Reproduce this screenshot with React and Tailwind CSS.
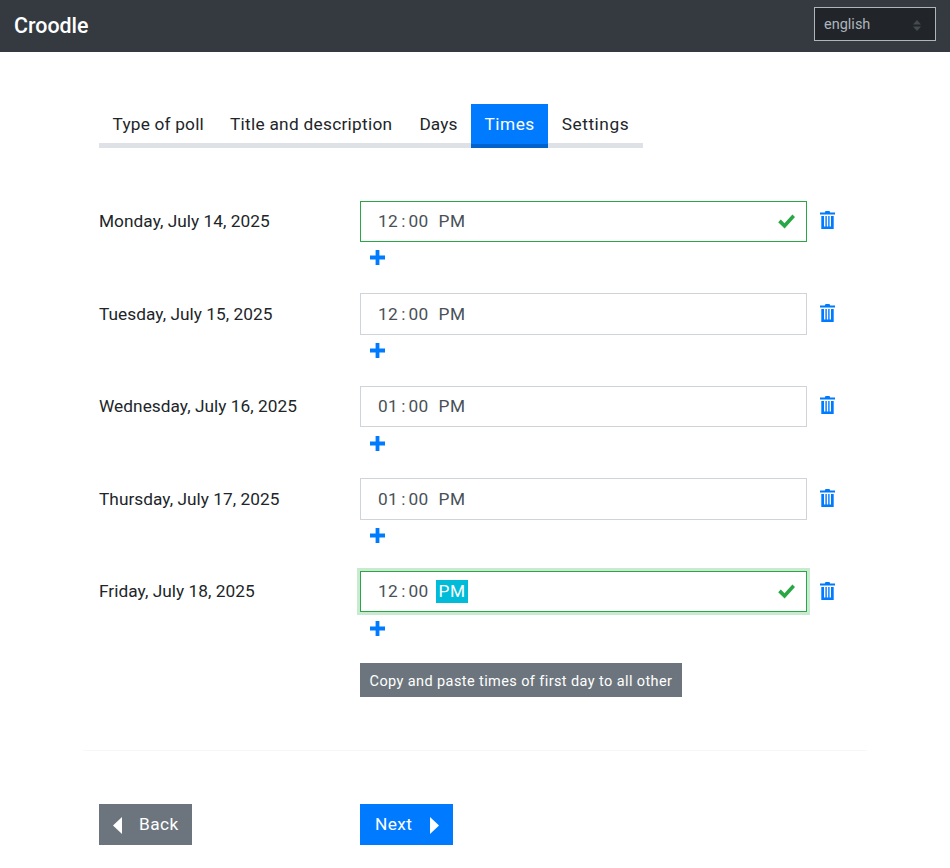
const tabs = [
  { label: 'Type of poll', className: 'pl-[13.5px] pr-[12.5px] tracking-[0.2px]' },
  { label: 'Title and description', className: 'px-[13.5px] tracking-[0.28px]' },
  { label: 'Days', className: 'px-[13.5px] tracking-[0.1px]' },
  { label: 'Times', active: true, className: 'px-[13.5px] tracking-[0.5px]' },
  { label: 'Settings', className: 'px-[13.5px] tracking-[0.55px]' },
];

const days = [
  { date: 'Monday, July 14, 2025', hour: '12', valid: true },
  { date: 'Tuesday, July 15, 2025', hour: '12' },
  { date: 'Wednesday, July 16, 2025', hour: '01' },
  { date: 'Thursday, July 17, 2025', hour: '01' },
  { date: 'Friday, July 18, 2025', hour: '12', valid: true, focused: true },
];

const Trash = () => (
  <svg width="15" height="18" viewBox="0 0 15 18" className="text-[#007bff]" fill="currentColor">
    <path d="M5.5 0h4l.7 1.5H15V3.4H0V1.5h4.8z" />
    <path fillRule="evenodd" d="M1.3 5h12.4v13H1.3zM4 5v10.6h1.4V5zM6.8 5v10.6h1.4V5zM9.6 5v10.6H11V5z" />
  </svg>
);

const Plus = () => (
  <svg width="15" height="15" viewBox="0 0 15 15" className="text-[#007bff]" fill="currentColor">
    <path d="M5.6 0h3.8v5.6H15v3.8H9.4V15H5.6V9.4H0V5.6h5.6z" />
  </svg>
);

const Check = () => (
  <svg width="17" height="15" viewBox="0 0 17 15" className="text-[#28a745]" fill="currentColor">
    <path d="M14.4 0.4 17 3 6.6 14.6 0.2 8.2l2.6-2.6 3.7 3.7z" />
  </svg>
);

const TimeRow = ({ day }) => (
  <div className="flex h-[92.6px] items-start">
    <div className="flex h-[41.4px] w-[261px] items-center pt-[1.4px] text-[17.28px] tracking-[0.04px] text-[#212529]">{day.date}</div>
    <div className="w-[447px]">
      <div
        className={`flex h-[41.4px] items-center border pl-[15px] pr-[11px] text-[17.28px] tracking-[0.4px] text-[#495057] ${
          day.valid ? 'border-[#28a745]' : 'border-[#ced4da]'
        } ${day.focused ? 'shadow-[0_0_0_3px_rgba(40,167,69,0.25)]' : ''}`}
      >
        <span className="w-[24px] pt-[1.4px] text-center">{day.hour}</span>
        <span className="w-[7px] pt-[1.4px] text-center">:</span>
        <span className="w-[23px] pt-[1.4px] text-center">00</span>
        <span
          className={`ml-[6px] flex h-[23px] w-[32px] items-center justify-center pt-[1.4px] ${
            day.focused ? 'bg-[#00bcd9] text-white' : ''
          }`}
        >
          PM
        </span>
        {day.valid && (
          <span className="ml-auto flex">
            <Check />
          </span>
        )}
      </div>
      <button className="mt-[8.4px] ml-[10px] flex">
        <Plus />
      </button>
    </div>
    <button className="ml-[13px] flex h-[39.2px] items-center">
      <Trash />
    </button>
  </div>
);

export default function App() {
  return (
    <div className="min-h-[868px] bg-white font-['Roboto',sans-serif]">
      <header className="flex h-[52px] items-center justify-between bg-[#343a40] pr-[14px] pl-[14px]">
        <div className="text-[21.4px] font-medium text-white">Croodle</div>
        <div className="mb-[4px] flex h-[34px] w-[122px] items-center justify-between border border-[#adb5bd] bg-[#212529] pt-[2px] pr-[14px] pl-[9px] text-[14.5px] text-[#adb5bd]">
          <span>english</span>
          <svg width="8" height="11" viewBox="0 0 8 11" className="text-[#454b50]" fill="currentColor">
            <path d="M4 0 8 4.6H0zM4 11 0 6.4h8z" />
          </svg>
        </div>
      </header>

      <main className="px-[83px] pt-[52px]">
        <div className="px-[16px]">
          <nav className="flex h-[44px] w-[544px] border-b-[5px] border-[#dee2e6]">
            {tabs.map((tab) => (
              <div
                key={tab.label}
                className={`-mb-[5px] flex h-[44px] items-center whitespace-nowrap border-b-[4px] pt-[2px] text-[17.28px] ${tab.className} ${
                  tab.active ? 'border-[#0062cc] bg-[#007bff] text-white' : 'border-transparent text-[#212529]'
                }`}
              >
                {tab.label}
              </div>
            ))}
          </nav>

          <div className="mt-[52.6px]">
            {days.map((day) => (
              <TimeRow key={day.date} day={day} />
            ))}
          </div>

          <div className="pl-[261px] -mt-[0.6px]">
            <button className="flex h-[34px] w-[322px] items-center justify-center bg-[#6c757d] pt-[3px] text-[14.5px] tracking-[0.4px] text-white">
              Copy and paste times of first day to all other
            </button>
          </div>
        </div>

        <hr className="mt-[53px] h-[1.5px] border-0 bg-[#f7f7f7]" />

        <div className="mt-[53px] flex px-[16px]">
          <div className="w-[261px]">
            <button className="flex h-[41px] w-[93px] items-center bg-[#6c757d] pl-[14px] text-[17.28px] tracking-[0.4px] text-white">
              <svg width="9" height="17" viewBox="0 0 9 17" fill="currentColor" className="mt-[1px]">
                <path d="M9 0v17L0 8.5z" />
              </svg>
              <span className="ml-[17px]">Back</span>
            </button>
          </div>
          <button className="flex h-[41px] w-[93px] items-center bg-[#007bff] pl-[15px] text-[17.28px] tracking-[0.4px] text-white">
            <span>Next</span>
            <svg width="9" height="17" viewBox="0 0 9 17" fill="currentColor" className="mt-[1px] ml-[18px]">
              <path d="M0 0v17l9-8.5z" />
            </svg>
          </button>
        </div>
      </main>
    </div>
  );
}
